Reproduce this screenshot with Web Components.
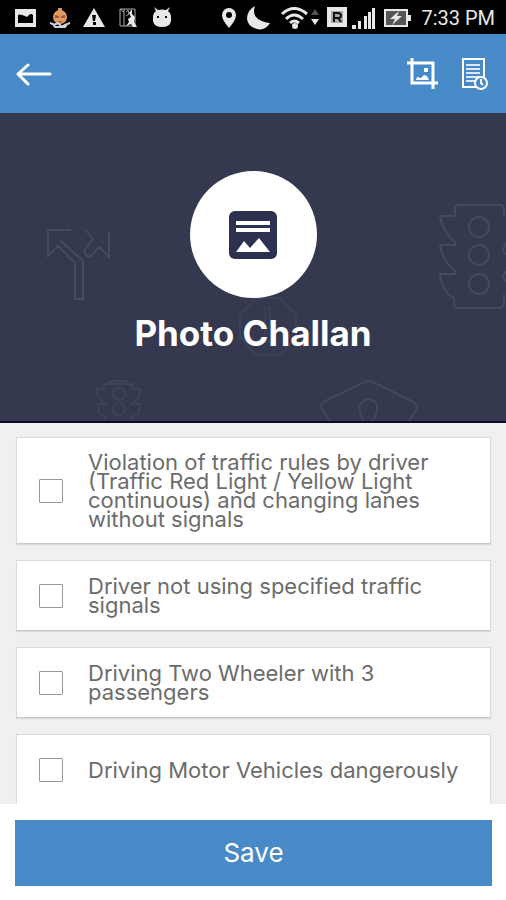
<!DOCTYPE html>
<html lang="en">
<head>
<meta charset="utf-8">
<meta name="viewport" content="width=device-width, initial-scale=1">
<title>Photo Challan</title>
<style>
  html, body {
    height: 100%;
    margin: 0;
  }

  body {
    font-family: Inter, "Open Sans", sans-serif;
    background: #fff;
    --blue: #4889c7;
    --navy: #34394f;
  }
</style>
</head>
<body>
<challan-screen>
  <status-bar slot="top" time="7:33 PM"></status-bar>
  <app-bar slot="top"></app-bar>
  <page-hero slot="top">Photo Challan</page-hero>

  <violation-item>Violation of traffic rules by driver (Traffic Red Light / Yellow Light continuous) and changing lanes without signals</violation-item>
  <violation-item>Driver not using specified traffic signals</violation-item>
  <violation-item>Driving Two Wheeler with 3 passengers</violation-item>
  <violation-item>Driving Motor Vehicles dangerously</violation-item>

  <save-button slot="bottom">Save</save-button>
</challan-screen>

<script>
function createShadow(element, html) {
  const template = document.createElement("template");
  template.innerHTML = html;
  const root = element.attachShadow({ mode: "open" });
  root.appendChild(template.content.cloneNode(true));
  return root;
}

// Whole screen: fixed top, scrolling list, fixed bottom
customElements.define("challan-screen", class extends HTMLElement {
  constructor() {
    super();
    createShadow(this, `
      <style>
        :host {
          display: flex;
          flex-direction: column;
          height: 100vh;
        }
        main {
          display: flex;
          flex: 1;
          flex-direction: column;
          gap: 16px;
          min-height: 0;
          padding: 14px 15px 0 16px;
          overflow-y: auto;
          scrollbar-width: none;
          background: #eff1f1;
        }
      </style>
      <slot name="top"></slot>
      <main><slot></slot></main>
      <slot name="bottom"></slot>
    `);
  }
});

customElements.define("status-bar", class extends HTMLElement {
  constructor() {
    super();
    const root = createShadow(this, `
      <style>
        :host {
          display: flex;
          flex: none;
          align-items: center;
          justify-content: space-between;
          height: 34px;
          padding: 2px 11px 0 15px;
          box-sizing: border-box;
          background: #000;
          color: #e8e8e8;
        }
        div { display: flex; align-items: center; }
        .left { gap: 12px; }
        .right { gap: 7px; }
        svg { display: block; fill: #e8e8e8; }
        time {
          margin-left: 2px;
          font: 400 20px/24px Roboto, sans-serif;
        }
      </style>
      <div class="left">
        <svg width="22" height="22" viewBox="0 0 22 22">
          <path fill-rule="evenodd" d="M0 2h21v18H0zM3 8v8h15V8q-2-2-4 0l-2 2-2-1-3-1q-2-1-4 0z"/>
        </svg>
        <svg width="22" height="22" viewBox="0 0 22 22">
          <path fill="#c8a265" d="M9 1h4v4H9z"/>
          <circle cx="11" cy="10" r="7" fill="#e09a62"/>
          <path fill="#a8563a" d="M6 8l4 1v2H6zM12 9l4-1v3h-4zM8 14h6l-3 2z"/>
          <path fill="none" stroke="#d3cfe0" stroke-width="2" d="M1 16l3 1 2 3h10l2-3 3-1M5 18l4-2 4 4 4-3"/>
        </svg>
        <svg width="22" height="22" viewBox="0 0 22 22">
          <path fill-rule="evenodd" d="M11 1l11 19H0zM9 8l1 6h2l1-6zM10 15v3h3v-3z"/>
        </svg>
        <svg width="22" height="22" viewBox="0 0 22 22">
          <path fill="none" stroke="#aaa" stroke-width="1" d="M3 2h15v17H3zM7 2v17M3 2l4 3M9 5l2-2 1 4-3 2"/>
          <path d="M12 6l3-4v5l3 3-1 5 3 5h-4l-2-3-5 2 3-4-1-3 3-2z"/>
        </svg>
        <svg width="22" height="22" viewBox="0 0 22 22">
          <path fill-rule="evenodd" d="M3 0l4 3q4-1 8 0l4-3-2 4q3 2 3 5v5q-1 6-9 6t-9-6V9q0-3 3-5zM6 9v2h2V9zM14 9v2h2V9z"/>
        </svg>
      </div>
      <div class="right">
        <svg width="16" height="22" viewBox="0 0 16 22">
          <path fill-rule="evenodd" d="M8 1a7 7 0 0 1 7 7q0 5-7 13Q1 13 1 8a7 7 0 0 1 7-7zM8 5a3 3 0 1 0 0 6 3 3 0 0 0 0-6z"/>
        </svg>
        <svg width="30" height="24" viewBox="0 0 30 24">
          <path d="M11 0Q6 14 26 17q-5 8-13 6Q4 21 3 13 3 4 11 0z"/>
        </svg>
        <svg width="38" height="24" viewBox="0 0 38 24">
          <g fill="none" stroke="#e8e8e8" stroke-width="3">
            <path d="M1 8q12-11 25 0M5 13q8-8 17 0M9 17q4-4 9 0"/>
          </g>
          <circle cx="14" cy="20" r="3"/>
          <path fill="#555" d="M30 9l4-6 4 6z"/>
          <path d="M30 13h8l-4 6z"/>
        </svg>
        <svg width="50" height="24" viewBox="0 0 50 24">
          <path fill-rule="evenodd" d="M1 1h20v20H1zM5 5v12h12V5z"/>
          <path fill="#aaa" d="M5 5h12v12H5z"/>
          <path fill="none" stroke="#111" stroke-width="2" d="M8 16V7h4q3 0 3 2.500t-3 2.500H8M12 12l3 4"/>
          <path d="M26 19h4v4h-4zM32 15h3v8h-3zM38 10h3v13h-3zM42 6h3v17h-3zM46 2h3v21h-3z"/>
        </svg>
        <svg width="29" height="22" viewBox="0 0 29 22">
          <path fill="#555" d="M2 3h21v16H2z"/>
          <path fill="none" stroke="#e8e8e8" stroke-width="2" d="M2 3h22v16H2z"/>
          <path d="M25 8h3v6h-3zM16 4L7 12h5l-3 6 10-9h-5z"/>
        </svg>
        <time></time>
      </div>
    `);
    root.querySelector("time").textContent = this.getAttribute("time");
  }
});

customElements.define("app-bar", class extends HTMLElement {
  constructor() {
    super();
    createShadow(this, `
      <style>
        :host {
          display: flex;
          flex: none;
          align-items: center;
          justify-content: space-between;
          height: 79px;
          padding: 0 16px;
          box-sizing: border-box;
          background: var(--blue);
        }
        nav { display: flex; gap: 20px; }
        button {
          padding: 0;
          border: 0;
          background: none;
          cursor: pointer;
        }
        svg { display: block; fill: none; stroke: #fff; }
      </style>
      <button type="button" aria-label="Back">
        <svg width="36" height="32" viewBox="0 0 36 32" stroke-width="3" stroke-linecap="round" stroke-linejoin="round">
          <path d="M34 16H2M12 7L2 16l10 10"/>
        </svg>
      </button>
      <nav>
        <button type="button" aria-label="Crop photo">
          <svg width="36" height="34" viewBox="0 0 36 34" stroke-width="3">
            <path d="M3 6h26v26M8 1v25h26"/>
            <path fill="#fff" stroke="none" d="M12 23l1-3 4 1 3-3 3 1 2 4zM20 11h4v4h-4z"/>
          </svg>
        </button>
        <button type="button" aria-label="Challan history">
          <svg width="30" height="34" viewBox="0 0 30 34" stroke-width="2">
            <path d="M3 2h21v28H3z"/>
            <path stroke="#dbe8f5" d="M6 8h14M6 12h14M6 16h14M6 20h14M6 24h10"/>
            <circle cx="21" cy="26" r="6" fill="#4889c7"/>
            <path d="M21 22v4l2 2"/>
          </svg>
        </button>
      </nav>
    `);
  }
});

customElements.define("page-hero", class extends HTMLElement {
  constructor() {
    super();
    createShadow(this, `
      <style>
        :host {
          position: relative;
          display: flex;
          flex: none;
          flex-direction: column;
          align-items: center;
          gap: 16px;
          height: 310px;
          padding-top: 58px;
          box-sizing: border-box;
          border-bottom: 2px solid #0c0b28;
          overflow: hidden;
          background: var(--navy);
          color: #fff;
        }
        .pattern {
          position: absolute;
          inset: 0;
          width: 100%;
          height: 100%;
          fill: none;
          stroke: #454a60;
          stroke-width: 2;
        }
        .badge {
          position: relative;
          display: grid;
          place-items: center;
          width: 127px;
          height: 127px;
          border-radius: 50%;
          background: #fff;
        }
        h1 {
          position: relative;
          margin: 0;
          font-size: 35px;
          line-height: 38px;
          font-weight: 700;
        }
      </style>
      <svg class="pattern" viewBox="0 0 506 308" preserveAspectRatio="xMidYMid slice" aria-hidden="true">
        <!-- forked arrow -->
        <path d="M71 117H48v26l10-10 17 17v36h8v-38L60 127M85 116l8 10-8 10q-2 6 5 8l9-10 10 10v-26"/>
        <!-- large traffic light -->
        <path d="M455 103v-7q0-4 4-4h41q4 0 4 4v7M455 103h-15q2 15 15 26v3h-15q2 15 15 26v3h-15q2 18 14 24v6q0 4 4 4h42q4 0 4-4v-10M506 129l-3 8 3 5M506 158l-3 6 3 5"/>
        <circle cx="479" cy="114" r="10"/>
        <circle cx="479" cy="142" r="10"/>
        <circle cx="479" cy="171" r="10"/>
        <!-- stop sign behind the title -->
        <path stroke="#3c4158" d="M256 185h24l16 17v22l-16 18h-24l-16-18v-22zM265 195v28M270 195v28M265 195h5M265 229h5"/>
        <!-- small traffic light -->
        <g stroke="#3e4359">
          <path d="M104 276v-5h28v5M104 276h-7l1 8 7 7h-7l1 9 6 4v4M132 276h8l-1 8-7 7h8l-1 9-7 4v4M110 271v-3h16v3"/>
          <circle cx="119" cy="281" r="6"/>
          <circle cx="119" cy="296" r="6"/>
        </g>
        <!-- crossing sign -->
        <path stroke="#42475d" d="M329 308l-7-12q-2-5 3-8l38-18q6-4 12 0l38 19q5 3 3 8l-7 11M363 308q-7-15 0-20 6-4 12 1 5 6-2 19"/>
      </svg>
      <div class="badge">
        <svg width="48" height="48" viewBox="0 0 48 48">
          <rect width="48" height="48" rx="6" fill="#2d3150"/>
          <path fill="#fff" d="M7 10h34v4H7zM7 17h34v4H7zM7 41l8-11 6 7 9-10 11 14z"/>
        </svg>
      </div>
      <h1><slot></slot></h1>
    `);
  }
});

customElements.define("violation-item", class extends HTMLElement {
  constructor() {
    super();
    createShadow(this, `
      <style>
        :host { display: block; flex: none; }
        label {
          display: flex;
          align-items: center;
          gap: 25px;
          min-height: 71px;
          padding: 15px 24px 14px 22px;
          box-sizing: border-box;
          border: 1px solid #d9dada;
          border-bottom-color: #c9cbcb;
          box-shadow: 0 1px 1px #d9dbdb;
          background: #fff;
          color: #6c6c6c;
          font-size: 22px;
          line-height: 19px;
          font-weight: 400;
          cursor: pointer;
        }
        input {
          appearance: none;
          flex: none;
          width: 24px;
          height: 24px;
          margin: 0;
          border: 1px solid #989898;
          border-radius: 1px;
          background: #fff;
        }
        input:checked { background: var(--blue); }
      </style>
      <label>
        <input type="checkbox">
        <span><slot></slot></span>
      </label>
    `);
  }
});

customElements.define("save-button", class extends HTMLElement {
  constructor() {
    super();
    createShadow(this, `
      <style>
        :host {
          display: block;
          flex: none;
          padding: 16px 14px 14px 15px;
          background: #fff;
        }
        button {
          display: block;
          width: 100%;
          height: 66px;
          border: 0;
          background: var(--blue);
          color: #fff;
          font: inherit;
          font-size: 26px;
          line-height: 30px;
          cursor: pointer;
        }
      </style>
      <button type="button"><slot></slot></button>
    `);
  }
});
</script>
</body>
</html>
